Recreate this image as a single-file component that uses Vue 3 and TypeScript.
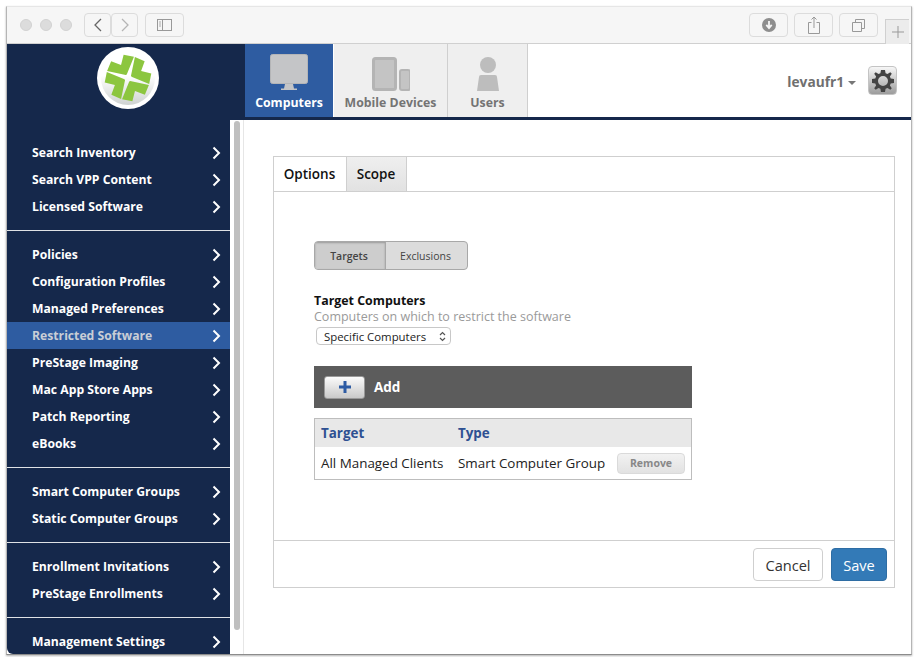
<template>
  <div class="screen">
    <div class="window">
      <div class="toolbar">
        <div class="lights">
          <span v-for="n in 3" :key="n" class="light"></span>
        </div>
        <div class="nav-btns">
          <button class="tool-btn nav-btn">
            <svg width="10" height="16" viewBox="0 0 10 16"><path d="M8 2 L2 8 L8 14" fill="none" stroke="#666" stroke-width="1.3" /></svg>
          </button>
          <button class="tool-btn nav-btn">
            <svg width="10" height="16" viewBox="0 0 10 16"><path d="M2 2 L8 8 L2 14" fill="none" stroke="#b5b5b5" stroke-width="1.3" /></svg>
          </button>
        </div>
        <button class="tool-btn side-btn">
          <svg width="16" height="12" viewBox="0 0 16 12">
            <rect x="0.5" y="0.5" width="14" height="11" fill="none" stroke="#999" />
            <path d="M5.5 0.5 V11.5" stroke="#999" />
            <path d="M2 3 H4 M2 5 H4 M2 7 H4" stroke="#aaa" />
          </svg>
        </button>
        <div class="toolbar-space"></div>
        <button class="tool-btn right-btn">
          <svg width="14" height="14" viewBox="0 0 14 14">
            <circle cx="7" cy="7" r="7" fill="#8e8e8e" />
            <path d="M7 3 V9 M4.3 6.8 L7 10 L9.7 6.8" fill="none" stroke="#f5f5f5" stroke-width="1.8" />
          </svg>
        </button>
        <button class="tool-btn right-btn">
          <svg width="12" height="18" viewBox="0 0 12 18">
            <path d="M3.5 6.5 H0.5 V17.5 H11.5 V6.5 H8.5 M6 12 V1 M3.5 3.5 L6 1 L8.5 3.5" fill="none" stroke="#999" />
          </svg>
        </button>
        <button class="tool-btn right-btn">
          <svg width="13" height="13" viewBox="0 0 13 13">
            <path d="M3.5 3 V0.5 H12.5 V9.5 H10 M0.5 3.5 H9.5 V12.5 H0.5 Z" fill="none" stroke="#999" />
          </svg>
        </button>
        <div class="new-tab">
          <svg width="12" height="12" viewBox="0 0 12 12"><path d="M6 0 V12 M0 6 H12" stroke="#999" /></svg>
        </div>
      </div>

      <header class="app-header">
        <div class="logo-area">
          <svg class="logo" width="62" height="62" viewBox="0 0 62 62">
            <defs>
              <linearGradient id="logoBg" x1="0" y1="0" x2="0" y2="1">
                <stop offset="0.45" stop-color="#ffffff" />
                <stop offset="1" stop-color="#cfd3d2" />
              </linearGradient>
            </defs>
            <circle cx="31" cy="31" r="31" fill="#fff" />
            <circle cx="31" cy="31" r="27" fill="url(#logoBg)" />
            <g transform="translate(31 31) rotate(17)" fill="#8cc63f">
              <path
                v-for="angle in [0, 90, 180, 270]"
                :key="angle"
                :transform="`rotate(${angle})`"
                d="M0.5 -22 L11 -21 L10.500 -10.500 L21 -11 L22 -0.5 L3 -2.200 L2.200 -3 Z"
              />
            </g>
          </svg>
        </div>
        <nav class="main-tabs">
          <a class="main-tab active" style="width: 88px">
            <svg width="38" height="37" viewBox="0 0 38 37">
              <rect x="0.5" y="0.5" width="37" height="29" rx="2" fill="#c4c5c7" stroke="#b4b5b7" />
              <path d="M15 30 H23 L24 34.500 H27 V36 H11 V34.500 H14 Z" fill="#c4c5c7" />
            </svg>
            <span>Computers</span>
          </a>
          <a class="main-tab" style="width: 114px">
            <svg width="38" height="34" viewBox="0 0 38 34">
              <rect x="1.500" y="1.500" width="22" height="31" rx="2" fill="#c4c4c4" stroke="#b4b4b4" stroke-width="3" />
              <rect x="28" y="13" width="10" height="20" rx="2" fill="#c4c4c4" stroke="#b4b4b4" stroke-width="2" />
            </svg>
            <span>Mobile Devices</span>
          </a>
          <a class="main-tab" style="width: 80px">
            <svg width="24" height="34" viewBox="0 0 24 34">
              <circle cx="12" cy="8" r="8" fill="#bdbdbd" />
              <path d="M3 20 Q3 18 5 18 H19 Q21 18 21 20 L23 34 H1 Z" fill="#bdbdbd" />
            </svg>
            <span>Users</span>
          </a>
        </nav>
        <div class="user-area">
          <span class="user-name">levaufr1</span>
          <span class="caret"></span>
          <button class="gear-btn">
            <svg width="22" height="22" viewBox="0 0 22 22">
              <path fill="#444" fill-rule="evenodd" d="M9 0 H13 L13.600 3.300 L15.500 4.100 L18.300 2.200 L19.800 3.700 L17.900 6.500 L18.700 8.400 L22 9 V13 L18.700 13.600 L17.900 15.500 L19.800 18.300 L18.300 19.800 L15.500 17.900 L13.600 18.700 L13 22 H9 L8.400 18.700 L6.500 17.900 L3.700 19.800 L2.200 18.300 L4.100 15.500 L3.300 13.600 L0 13 V9 L3.300 8.400 L4.100 6.500 L2.200 3.700 L3.700 2.200 L6.500 4.100 L8.400 3.300 Z M11 6 A5 5 0 1 0 11 16 A5 5 0 1 0 11 6 Z" />
            </svg>
          </button>
        </div>
      </header>

      <div class="app-body">
        <aside class="sidebar">
          <div v-for="(group, i) in menu" :key="i" class="menu-group">
            <a
              v-for="item in group"
              :key="item"
              class="menu-item"
              :class="{ selected: item === selected }"
            >
              <span>{{ item }}</span>
              <svg width="9" height="14" viewBox="0 0 9 14"><path d="M1.500 1.500 L7 7 L1.500 12.500" fill="none" stroke="#fff" stroke-width="2" /></svg>
            </a>
          </div>
        </aside>
        <div class="scroll-track"><div class="scroll-thumb"></div></div>

        <main class="content">
          <section class="panel">
            <div class="panel-tabs">
              <a class="panel-tab current">Options</a>
              <a class="panel-tab">Scope</a>
            </div>
            <div class="panel-body">
              <div class="segment">
                <span class="seg on">Targets</span>
                <span class="seg">Exclusions</span>
              </div>
              <h4 class="field-title">Target Computers</h4>
              <p class="field-desc">Computers on which to restrict the software</p>
              <div class="select">
                <span>Specific Computers</span>
                <svg width="7" height="11" viewBox="0 0 7 11"><path d="M1 4 L3.500 1.500 L6 4 M1 7 L3.500 9.500 L6 7" fill="none" stroke="#555" stroke-width="1.200" /></svg>
              </div>
              <div class="add-bar">
                <button class="add-btn">
                  <svg width="14" height="14" viewBox="0 0 14 14"><path d="M7 1 V13 M1 7 H13" stroke="#2d5ba3" stroke-width="3" /></svg>
                </button>
                <span>Add</span>
              </div>
              <table class="targets">
                <thead>
                  <tr><th class="col-target">Target</th><th>Type</th><th></th></tr>
                </thead>
                <tbody>
                  <tr v-for="row in rows" :key="row.target">
                    <td>{{ row.target }}</td>
                    <td>{{ row.type }}</td>
                    <td class="col-action"><button class="remove-btn">Remove</button></td>
                  </tr>
                </tbody>
              </table>
            </div>
            <div class="panel-footer">
              <button class="btn">Cancel</button>
              <button class="btn primary">Save</button>
            </div>
          </section>
        </main>
      </div>
    </div>
  </div>
</template>

<script setup lang="ts">
interface TargetRow {
  target: string
  type: string
}

const selected = 'Restricted Software'

const menu: string[][] = [
  ['Search Inventory', 'Search VPP Content', 'Licensed Software'],
  [
    'Policies',
    'Configuration Profiles',
    'Managed Preferences',
    'Restricted Software',
    'PreStage Imaging',
    'Mac App Store Apps',
    'Patch Reporting',
    'eBooks'
  ],
  ['Smart Computer Groups', 'Static Computer Groups'],
  ['Enrollment Invitations', 'PreStage Enrollments'],
  ['Management Settings']
]

const rows: TargetRow[] = [{ target: 'All Managed Clients', type: 'Smart Computer Group' }]
</script>

<style>
html,
body {
  margin: 0;
  background: #fff;
  overflow: hidden;
}
</style>

<style scoped>
.screen {
  width: 916px;
  height: 657px;
  box-sizing: border-box;
  padding: 6px 4px 2px 6px;
  font-family: "Open Sans", "Liberation Sans", sans-serif;
  color: #222;
}

.window {
  height: 100%;
  box-sizing: border-box;
  border: 1px solid #b5b5b5;
  border-top-color: #e6e6e6;
  border-bottom: 1px solid #8c8c8c;
  box-shadow: 0 1px 2px rgba(0, 0, 0, 0.3);
  display: flex;
  flex-direction: column;
  overflow: hidden;
  background: #fff;
}

.toolbar {
  height: 37px;
  flex: none;
  box-sizing: border-box;
  background: #f6f6f6;
  border-bottom: 1px solid #d0d0d0;
  display: flex;
  align-items: flex-start;
  padding: 6px 2px 0 13px;
}

.lights {
  display: flex;
  gap: 8px;
  margin-top: 6px;
  margin-right: 12px;
}

.light {
  width: 12px;
  height: 12px;
  border-radius: 50%;
  background: #dcdcdc;
  border: 1px solid #d2d2d2;
  box-sizing: border-box;
}

.tool-btn {
  height: 24px;
  box-sizing: border-box;
  border: 1px solid #dcdcdc;
  border-radius: 4px;
  background: #f6f6f6;
  display: flex;
  align-items: center;
  justify-content: center;
  padding: 0;
}

.nav-btns {
  display: flex;
}

.nav-btn {
  width: 27px;
}

.side-btn {
  width: 39px;
  margin-left: 7px;
}

.toolbar-space {
  flex: 1;
}

.right-btn {
  width: 39px;
  margin-right: 6px;
}

.new-tab {
  width: 24px;
  height: 25px;
  margin-top: 6px;
  margin-left: 1px;
  box-sizing: border-box;
  background: #ececec;
  border-left: 1px solid #d0d0d0;
  border-top: 1px solid #d0d0d0;
  display: flex;
  align-items: center;
  justify-content: center;
}

.app-header {
  height: 76px;
  flex: none;
  box-sizing: border-box;
  border-bottom: 3px solid #15284b;
  display: flex;
}

.logo-area {
  width: 238px;
  box-sizing: border-box;
  background: #15284b;
  display: flex;
  justify-content: center;
  align-items: flex-start;
  padding: 3px 0 0 4px;
  margin-bottom: -3px;
}

.main-tabs {
  display: flex;
}

.main-tab {
  box-sizing: border-box;
  background: #efefef;
  border-right: 1px solid #cfcfcf;
  display: flex;
  flex-direction: column;
  align-items: center;
  justify-content: flex-end;
  gap: 3px;
  padding-bottom: 6px;
  color: #747474;
  font-size: 12.3px;
  font-weight: 700;
}

.main-tab.active {
  background: #2e5ca1;
  color: #fff;
  border-right: 0;
  margin-right: 1px;
}

.user-area {
  flex: 1;
  display: flex;
  align-items: flex-start;
  justify-content: flex-end;
  padding: 22px 14px 0 0;
  color: #6f6f6f;
  font-size: 13.7px;
  font-weight: 700;
}

.user-name {
  margin-top: 6px;
}

.caret {
  width: 0;
  height: 0;
  border-left: 4px solid transparent;
  border-right: 4px solid transparent;
  border-top: 4px solid #777;
  margin: 15px 0 0 4px;
}

.gear-btn {
  width: 29px;
  height: 29px;
  margin-left: 12px;
  padding: 0;
  box-sizing: border-box;
  border: 1px solid #c4c4c4;
  border-radius: 4px;
  background: linear-gradient(#f7f7f7, #9c9c9c);
  display: flex;
  align-items: center;
  justify-content: center;
}

.app-body {
  flex: 1;
  min-height: 0;
  display: flex;
}

.sidebar {
  width: 223px;
  flex: none;
  background: #15284b;
  overflow: hidden;
  border-bottom-left-radius: 6px;
  padding-top: 9px;
}

.menu-group {
  padding: 10px 0;
  border-bottom: 1px solid #dfe2e6;
}

.menu-group:last-child {
  border-bottom: 0;
}

.menu-item {
  height: 27px;
  display: flex;
  align-items: center;
  justify-content: space-between;
  padding: 0 9px 0 25px;
  color: #fff;
  font-size: 12.2px;
  font-weight: 700;
}

.menu-item.selected {
  background: #2e5ca1;
  color: #c9ced6;
}

.scroll-track {
  width: 14px;
  flex: none;
  box-sizing: border-box;
  padding: 1px 3px 24px 4px;
  border-right: 1px solid #e6e6e6;
}

.scroll-thumb {
  height: 100%;
  background: #bfbfbf;
  border-radius: 4px;
}

.content {
  flex: 1;
  padding: 36px 16px 0 29px;
}

.panel {
  height: 432px;
  box-sizing: border-box;
  border: 1px solid #cfcfcf;
  display: flex;
  flex-direction: column;
}

.panel-tabs {
  height: 35px;
  flex: none;
  box-sizing: border-box;
  border-bottom: 1px solid #cfcfcf;
  display: flex;
}

.panel-tab {
  width: 60px;
  padding-right: 1px;
  box-sizing: border-box;
  background: linear-gradient(#efefef, #e2e2e2);
  border-right: 1px solid #cfcfcf;
  display: flex;
  align-items: center;
  justify-content: center;
  font-size: 13.5px;
  font-weight: 600;
  color: #111;
}

.panel-tab.current {
  width: 73px;
  background: #fff;
}

.panel-body {
  flex: 1;
  padding: 49px 0 0 40px;
}

.segment {
  display: flex;
  width: 154px;
  height: 29px;
  box-sizing: border-box;
  border: 1px solid #a8a8a8;
  border-radius: 4px;
  overflow: hidden;
  background: #dcdcdc;
  font-size: 10.5px;
  color: #444;
}

.seg {
  display: flex;
  align-items: center;
  justify-content: center;
  flex: 1;
  padding-right: 2px;
}

.seg.on {
  flex: none;
  width: 71px;
  box-sizing: border-box;
  background: #cdcdcd;
  border-right: 1px solid #a8a8a8;
  box-shadow: inset 0 1px 2px rgba(0, 0, 0, 0.25);
  font-weight: 600;
}

.field-title {
  margin: 23px 0 0;
  font-size: 12.4px;
  line-height: 16px;
  font-weight: 700;
  color: #111;
}

.field-desc {
  margin: 0;
  font-size: 12.5px;
  line-height: 16px;
  color: #9a9a9a;
}

.select {
  width: 135px;
  height: 18px;
  margin: 2px 0 0 2px;
  box-sizing: border-box;
  border: 1px solid #c8c8c8;
  border-radius: 4px;
  background: #fff;
  display: flex;
  align-items: center;
  justify-content: space-between;
  padding: 0 4px 0 7px;
  font-size: 11.4px;
  color: #222;
}

.add-bar {
  width: 378px;
  height: 42px;
  margin-top: 21px;
  background: #5c5c5c;
  display: flex;
  align-items: center;
  gap: 9px;
  padding-left: 10px;
  box-sizing: border-box;
  color: #fff;
  font-size: 13.5px;
  font-weight: 700;
}

.add-btn {
  width: 41px;
  height: 23px;
  padding: 0;
  border: 1px solid #999;
  border-radius: 3px;
  background: linear-gradient(#fbfbfb, #c9c9c9);
  display: flex;
  align-items: center;
  justify-content: center;
}

.targets {
  width: 378px;
  margin-top: 10px;
  box-sizing: border-box;
  border: 1px solid #bdbdbd;
  border-collapse: separate;
  border-spacing: 0;
  font-size: 13.4px;
}

.targets th {
  height: 28px;
  padding: 0 0 0 6px;
  background: #e8e8e8;
  text-align: left;
  color: #2e5092;
  font-weight: 700;
}

.targets td {
  height: 32px;
  padding: 0 0 0 6px;
  color: #222;
  white-space: nowrap;
}

.col-target {
  width: 131px;
}

.col-action {
  text-align: right;
  padding-right: 6px !important;
}

.remove-btn {
  width: 68px;
  height: 21px;
  padding: 0;
  border: 1px solid #dadada;
  border-radius: 4px;
  background: linear-gradient(#f2f2f2, #e2e2e2);
  color: #888;
  font-family: inherit;
  font-size: 10.5px;
  font-weight: 700;
}

.panel-footer {
  height: 47px;
  flex: none;
  box-sizing: border-box;
  border-top: 1px solid #cfcfcf;
  display: flex;
  justify-content: flex-end;
  gap: 8px;
  padding: 7px 7px 0 0;
}

.btn {
  height: 33px;
  padding: 0;
  width: 70px;
  border: 1px solid #cfcfcf;
  border-radius: 4px;
  background: #fff;
  color: #333;
  font-family: inherit;
  font-size: 14.6px;
}

.btn.primary {
  width: 56px;
  background: #337ab7;
  border-color: #2e6da4;
  color: #fff;
}
</style>
